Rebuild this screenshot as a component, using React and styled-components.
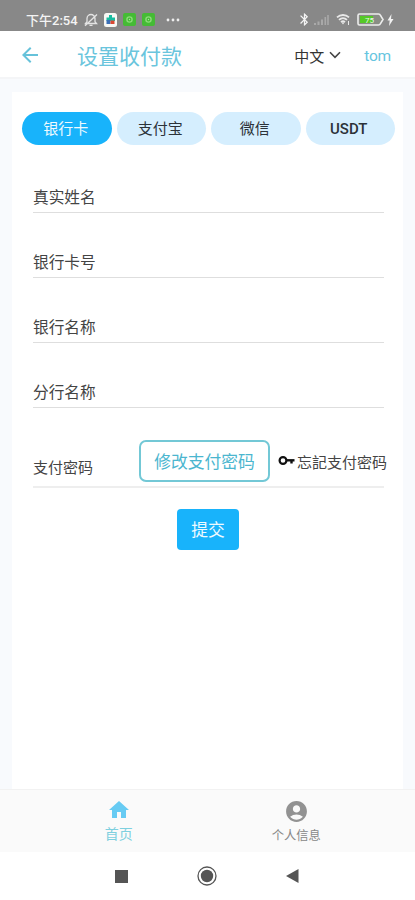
import React, { useState } from 'react';
import styled, { createGlobalStyle } from 'styled-components';
import {
  MdAccountCircle,
  MdArrowBack,
  MdBluetooth,
  MdHome
} from 'react-icons/md';

const GlobalStyle = createGlobalStyle`
  * {
    box-sizing: border-box;
  }
  body {
    margin: 0;
    background: #fff;
    font-family: Roboto, 'Noto Sans CJK SC', sans-serif;
    color: #444;
  }
  button {
    font-family: inherit;
    padding: 0;
    border: 0;
    background: none;
  }
`;

const Screen = styled.div`
  display: flex;
  flex-direction: column;
  width: 415px;
  height: 900px;
  overflow: hidden;
`;

const StatusBar = styled.div`
  display: flex;
  justify-content: space-between;
  height: 31px;
  padding: 8px 21px 0 26px;
  background: #888;
  color: #f4f4f4;
`;

const StatusGroup = styled.div`
  display: flex;
  align-items: center;
  height: 23px;
`;

const Clock = styled.span`
  width: 58px;
  font-size: 13px;
  font-weight: 500;
  white-space: nowrap;
`;

const Header = styled.header`
  display: flex;
  align-items: center;
  height: 48px;
  padding: 2px 24px 0 18px;
  background: #fff;
  border-bottom: 2px solid #f4f5f7;
  flex: none;
`;

const BackButton = styled.button`
  display: flex;
  width: 59px;
  color: #66c2da;
  font-size: 24px;
`;

const Title = styled.h1`
  flex: 1;
  margin: 0;
  padding-top: 3px;
  font-size: 21px;
  line-height: 30px;
  font-weight: 400;
  color: #6ac5dd;
`;

const Language = styled.button`
  display: flex;
  align-items: center;
  gap: 5px;
  margin-right: 23px;
  font-size: 15px;
  color: #333;
`;

const User = styled.span`
  padding-top: 2px;
  font-size: 15.5px;
  letter-spacing: -0.2px;
  color: #66c5e0;
`;

const Main = styled.main`
  flex: 1;
  display: flex;
  padding: 13px 12px 0;
  background: #f8fafd;
`;

const Panel = styled.section`
  flex: 1;
  padding: 20px 8px 0 10px;
  background: #fff;
`;

const Tabs = styled.div`
  display: grid;
  grid-template-columns: repeat(4, 1fr);
  gap: 5px;
`;

const Tab = styled.button`
  height: 33px;
  padding: ${props => (props.$latin ? '1px 3px 0 0' : '2px 2px 0 0')};
  border-radius: 17px;
  font-size: 15px;
  line-height: 31px;
  font-weight: ${props => (props.$latin ? 500 : 400)};
  background: ${props => (props.$active ? '#18b3fb' : '#d5eefe')};
  color: ${props => (props.$active ? '#eefaff' : '#2c3238')};
`;

const Fields = styled.div`
  padding: 3px 11px 0;
`;

const Field = styled.div`
  display: flex;
  align-items: flex-end;
  height: ${props => (props.$tall ? 80 : 65)}px;
  padding-bottom: ${props => (props.$tall ? 4 : 2)}px;
  border-bottom: ${props => (props.$tall ? 2 : 1)}px solid
    ${props => (props.$tall ? '#eee' : '#dedede')};
`;

const Label = styled.label`
  padding-bottom: ${props => (props.$small ? 2 : 0)}px;
  font-size: ${props => (props.$small ? 15 : 15.7)}px;
  line-height: 24px;
  white-space: nowrap;
`;

const ChangeButton = styled.button`
  flex: none;
  width: 131px;
  height: 42px;
  margin-left: 46px;
  padding-top: 2px;
  border: 2px solid #73c8d6;
  border-radius: 7px;
  font-size: 16.8px;
  line-height: 36px;
  color: #4bb6cf;
`;

const ForgotLink = styled.span`
  display: flex;
  align-items: center;
  gap: 2px;
  height: 42px;
  margin: 0 -4px 0 8px;
  font-size: 15px;
  white-space: nowrap;

  svg {
    flex: none;
  }
`;

const Submit = styled.button`
  display: block;
  width: 62px;
  height: 41px;
  margin: 21px auto 0 155px;
  padding-bottom: 1px;
  border-radius: 4px;
  background: #18b3fb;
  color: #eefaff;
  font-size: 16.8px;
`;

const TabBar = styled.nav`
  display: flex;
  justify-content: space-around;
  flex: none;
  height: 63px;
  padding: 8px 30px 0;
  background: #fafafa;
  border-top: 1px solid #f2f2f2;
`;

const TabBarItem = styled.div`
  display: flex;
  flex-direction: column;
  align-items: center;
  gap: 2px;
  width: 80px;
  padding-top: ${props => (props.$active ? 0 : 1)}px;
  font-size: ${props => (props.$active ? 14 : 12.3)}px;
  line-height: 20px;
  color: ${props => (props.$active ? '#7ed0df' : '#888')};

  svg {
    color: ${props => (props.$active ? '#67cbf3' : '#929292')};
  }
`;

const SystemNav = styled.div`
  display: flex;
  align-items: center;
  justify-content: space-between;
  flex: none;
  height: 48px;
  padding: 0 116px 0 115px;
  background: #fff;
`;

const MutedBell = () => (
  <svg width="14" height="14" viewBox="0 0 14 14" fill="none" stroke="#e4e4e4">
    <path
      d="M1.5 10.5h11L11 8.8V5.5a4 4 0 0 0-8 0v3.3zM5.5 12.3h3M1 12.8 13 1.5"
      strokeWidth="1.3"
    />
  </svg>
);

const StoreBadge = () => (
  <svg width="13" height="14" viewBox="0 0 13 14" style={{ marginLeft: 6 }}>
    <rect width="13" height="14" rx="2.5" fill="#f8f8f5" />
    <path d="M5 2h3v2.5h3V8H2.5V4.5H5z" fill="#18bca0" />
    <path d="M2.5 7h4v4h-4z" fill="#3b6fb6" />
    <path d="M6.5 7.5h4V11h-4z" fill="#dc4932" />
  </svg>
);

const GreenBadge = () => (
  <svg width="13" height="13" viewBox="0 0 13 13" style={{ marginLeft: 6 }}>
    <rect width="13" height="13" rx="2" fill="#45bb35" />
    <circle cx="6.5" cy="6.5" r="2.6" fill="none" stroke="#8bdc78" strokeWidth="1.4" />
    <circle cx="6.5" cy="6.5" r="0.7" fill="#a8e69a" />
  </svg>
);

const Dots = () => (
  <svg width="14" height="4" viewBox="0 0 14 4" fill="#eee" style={{ marginLeft: 11 }}>
    <circle cx="2" cy="2" r="1.4" />
    <circle cx="7" cy="2" r="1.4" />
    <circle cx="12" cy="2" r="1.4" />
  </svg>
);

const Signal = () => (
  <svg width="17" height="12" viewBox="0 0 17 12" fill="#a9a9a9" style={{ marginLeft: 1 }}>
    <path d="M1 9h2v2H1zM4.5 7.5h2V11h-2zM8 5.5h2V11H8zM11.5 3h1.6v8h-1.6zM14.2 1h1.6v10h-1.6z" />
  </svg>
);

const Wifi = () => (
  <svg width="15" height="13" viewBox="0 0 15 13" fill="none" stroke="#e8e8e8" style={{ marginLeft: 6 }}>
    <path d="M1 4.3a9 9 0 0 1 12 0M3 6.8a6 6 0 0 1 8 0M5 9.1a3 3 0 0 1 4 0" strokeWidth="1.8" />
    <path d="M5.5 9.5h3L7 11.5z" fill="#e8e8e8" stroke="none" />
    <path d="M12.5 8v4" />
  </svg>
);

const Battery = () => (
  <svg width="27" height="13" viewBox="0 0 27 13" style={{ marginLeft: 6 }}>
    <path
      d="M2.5 1h19q1.5 0 2 1.5L26 6.5l-2.5 4q-.5 1.5-2 1.5h-19Q1 12 1 10.5v-8Q1 1 2.5 1z"
      fill="#898c85"
      stroke="#ededed"
      strokeWidth="1.6"
    />
    <path d="M3 3h13v7H3z" fill="#55c927" />
    <text x="8" y="9.5" fontSize="8" fontFamily="Roboto" fill="#eef6e8">
      75
    </text>
  </svg>
);

const Bolt = () => (
  <svg width="7" height="12" viewBox="0 0 7 12" fill="#f2f2f2" style={{ marginLeft: 3 }}>
    <path d="M4.5 0 .5 6.5h2.2L2 12l4.5-7H4z" />
  </svg>
);

const Key = () => (
  <svg width="17" height="12" viewBox="0 0 17 12" fill="none" stroke="#111">
    <circle cx="5" cy="5.5" r="3.4" strokeWidth="2.2" />
    <path d="M8.5 5.3H16.5" strokeWidth="2.4" />
    <path d="M13.5 5.5v3" strokeWidth="2.4" />
  </svg>
);

const Chevron = () => (
  <svg width="12" height="8" viewBox="0 0 12 8" fill="none" stroke="#444" strokeWidth="1.6">
    <path d="m1 1.3 5 5 5-5" />
  </svg>
);

const tabs = ['银行卡', '支付宝', '微信', 'USDT'];
const fields = ['真实姓名', '银行卡号', '银行名称', '分行名称'];

export default () => {
  const [active, setActive] = useState('银行卡');
  return (
    <Screen>
      <GlobalStyle />
      <StatusBar>
        <StatusGroup>
          <Clock>下午2:54</Clock>
          <MutedBell />
          <StoreBadge />
          <GreenBadge />
          <GreenBadge />
          <Dots />
        </StatusGroup>
        <StatusGroup>
          <MdBluetooth size={15} />
          <Signal />
          <Wifi />
          <Battery />
          <Bolt />
        </StatusGroup>
      </StatusBar>
      <Header>
        <BackButton>
          <MdArrowBack />
        </BackButton>
        <Title>设置收付款</Title>
        <Language>
          中文
          <Chevron />
        </Language>
        <User>tom</User>
      </Header>
      <Main>
        <Panel>
          <Tabs>
            {tabs.map(tab => (
              <Tab
                key={tab}
                $active={tab === active}
                $latin={tab === 'USDT'}
                onClick={() => setActive(tab)}
              >
                {tab}
              </Tab>
            ))}
          </Tabs>
          <Fields>
            {fields.map(field => (
              <Field key={field}>
                <Label>{field}</Label>
              </Field>
            ))}
            <Field $tall>
              <Label $small>支付密码</Label>
              <ChangeButton>修改支付密码</ChangeButton>
              <ForgotLink>
                <Key />
                忘記支付密码
              </ForgotLink>
            </Field>
          </Fields>
          <Submit>提交</Submit>
        </Panel>
      </Main>
      <TabBar>
        <TabBarItem $active>
          <MdHome size={24} />
          首页
        </TabBarItem>
        <TabBarItem>
          <MdAccountCircle size={25} />
          个人信息
        </TabBarItem>
      </TabBar>
      <SystemNav>
        <svg width="13" height="13">
          <rect width="13" height="13" fill="#555" />
        </svg>
        <svg width="20" height="20" viewBox="0 0 20 20">
          <circle cx="10" cy="10" r="9" fill="none" stroke="#555" strokeWidth="1.3" />
          <circle cx="10" cy="10" r="6.2" fill="#555" />
        </svg>
        <svg width="13" height="14" viewBox="0 0 13 14">
          <path d="M0 7 12.5 0v14z" fill="#555" />
        </svg>
      </SystemNav>
    </Screen>
  );
};
